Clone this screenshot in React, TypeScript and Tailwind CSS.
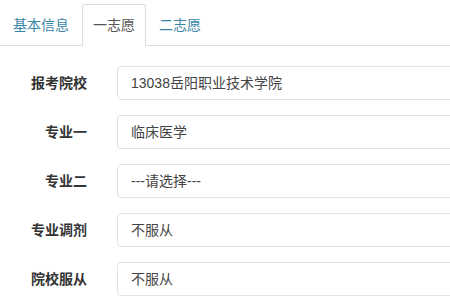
const tabs = ["基本信息", "一志愿", "二志愿"];
const active = 1;

const rows: { label: string; value: string }[] = [
  { label: "报考院校", value: "13038岳阳职业技术学院" },
  { label: "专业一", value: "临床医学" },
  { label: "专业二", value: "---请选择---" },
  { label: "专业调剂", value: "不服从" },
  { label: "院校服从", value: "不服从" },
];

export default function App() {
  return (
    <div
      className="w-[450px] h-[300px] overflow-hidden bg-white text-[14px] leading-[20px]"
      style={{ fontFamily: '"Liberation Sans", "Noto Sans CJK SC", sans-serif' }}
    >
      <ul className="flex pt-[4px] pl-[2px] border-b border-[#dddddd]">
        {tabs.map((t, i) => (
          <li key={t} className="mr-[2px] -mb-px">
            {i === active ? (
              <span className="block px-[10px] py-[10px] border border-[#dddddd] border-b-white rounded-t-[3px] bg-white text-[#555555]">
                {t}
              </span>
            ) : (
              <span className="block px-[10px] py-[10px] border border-transparent text-[#3a87a8]">{t}</span>
            )}
          </li>
        ))}
      </ul>

      <div className="pt-[20px] flex flex-col gap-[15px]">
        {rows.map((r) => (
          <div key={r.label} className="flex items-center">
            <label className="w-[87px] shrink-0 text-right font-bold text-[#333333]">{r.label}</label>
            <div className="ml-[30px] shrink-0 w-[360px] h-[34px] flex items-center pl-[13px] border border-[#e2e2e2] rounded-[4px] text-[#444444]">
              {r.value}
            </div>
          </div>
        ))}
      </div>
    </div>
  );
}
